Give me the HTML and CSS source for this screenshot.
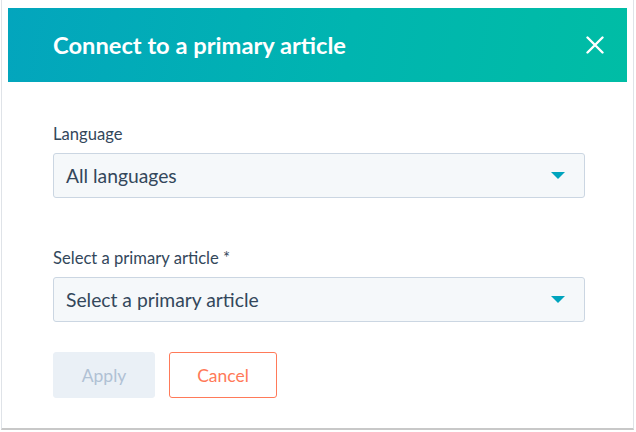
FILE: index.html
```html
<!DOCTYPE html>
<html>
<head>
<meta charset="utf-8">
<link rel="stylesheet" href="styles.css">
</head>
<body>
<div class="frame">
  <div class="header">
    <h1 class="title">Connect to a primary article</h1>
    <button class="close" aria-label="Close">
      <svg width="18" height="18" viewBox="0 0 18 18"><path d="M1.5 1.5 L16.5 16.5 M16.5 1.5 L1.5 16.5" stroke="#fff" stroke-width="2.4" stroke-linecap="round"/></svg>
    </button>
  </div>
  <div class="body">
    <div class="field">
      <label class="label">Language</label>
      <div class="select">
        <span class="value">All languages</span>
        <span class="caret"></span>
      </div>
    </div>
    <div class="field">
      <label class="label">Select a primary article *</label>
      <div class="select">
        <span class="value">Select a primary article</span>
        <span class="caret"></span>
      </div>
    </div>
    <div class="actions">
      <button class="btn btn-apply">Apply</button>
      <button class="btn btn-cancel">Cancel</button>
    </div>
  </div>
</div>
</body>
</html>
```
FILE: styles.css
```css
html, body {
  margin: 0;
  padding: 0;
  background: #ffffff;
}
body {
  font-family: Lato, "Noto Sans", sans-serif;
  color: #33475b;
}
.frame {
  margin: 0 2px 0 1px;
  height: 430px;
  box-sizing: border-box;
  border-left: 1px solid #dfe3e8;
  border-right: 1px solid #dfe3e8;
  border-bottom: 2px solid #c8c8c8;
  padding: 8px 6px 0 6px;
}
.header {
  height: 74px;
  background: linear-gradient(100deg, #03a5bd 0%, #00b5b0 55%, #00bda5 100%);
  display: flex;
  align-items: center;
  justify-content: space-between;
  padding: 0 23px 0 45px;
}
.title {
  margin: 0;
  font-size: 23.7px;
  font-weight: 700;
  color: #ffffff;
  letter-spacing: 0;
}
.close {
  background: none;
  border: 0;
  padding: 0;
  width: 18px;
  height: 18px;
  display: flex;
}
.body {
  padding: 42px 42px 0 45px;
}
.field {
  display: flex;
  flex-direction: column;
  margin-bottom: 50px;
}
.label {
  font-size: 16.6px;
  line-height: 20px;
  margin-bottom: 9px;
}
.select {
  height: 45px;
  box-sizing: border-box;
  border: 1px solid #cbd6e2;
  border-radius: 3px;
  background: #f5f8fa;
  display: flex;
  align-items: center;
  justify-content: space-between;
  padding: 0 19px 0 12px;
}
.value {
  font-size: 19.3px;
}
.caret {
  width: 0;
  height: 0;
  border-left: 7px solid transparent;
  border-right: 7px solid transparent;
  border-top: 7px solid #00a4bd;
}
.actions {
  display: flex;
  gap: 14px;
  margin-top: -20px;
}
.btn {
  height: 46px;
  box-sizing: border-box;
  border-radius: 3px;
  font-family: Lato, "Noto Sans", sans-serif;
  font-size: 17.5px;
  padding: 0;
}
.btn-apply {
  width: 102px;
  background: #eaf0f6;
  border: 1px solid #eaf0f6;
  color: #b0c1d4;
}
.btn-cancel {
  width: 108px;
  background: #ffffff;
  border: 1px solid #ff7a59;
  color: #ff7a59;
}
```
